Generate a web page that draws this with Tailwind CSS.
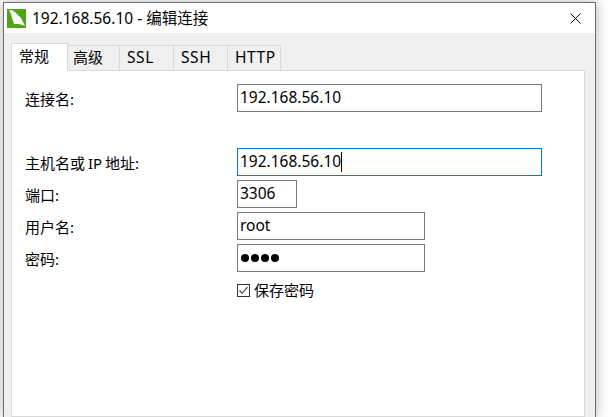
<!DOCTYPE html>
<html>
<head>
<meta charset="utf-8">
<script src="https://cdn.jsdelivr.net/npm/@tailwindcss/browser@4"></script>
</head>
<body class="w-[608px] h-[417px] overflow-hidden bg-white font-['Noto_Sans','Noto_Sans_CJK_SC',sans-serif] text-[15px] text-black">
<div class="flex h-[417px] w-[608px] pt-[2px] pr-[12px] pl-[3px]">
  <div class="flex h-[415px] w-[593px] flex-col border-t border-r border-l border-[#6e6e6e] shadow-[0_0_12px_rgba(0,0,0,0.3)]">
    <div class="flex h-[30px] shrink-0 items-center bg-white pr-[14px] pl-[3px]">
      <svg class="mt-[1px] h-[19px] w-[19px] shrink-0" viewBox="0 0 19 19"><rect width="19" height="19" fill="#4ea516"/><path d="M2 1 L6 1.5 L10 5 L14 9 L16 13 L18 17 L12 15 L7 15 L5 9 L4 5 Z" fill="#fff"/></svg>
      <span class="ml-[6px] text-[15.5px] leading-[20px]">192.168.56.10 - 编辑连接</span>
      <svg class="ml-auto h-[11px] w-[11px]" viewBox="0 0 11 11"><path d="M0.5 0.5 L10.5 10.5 M10.5 0.5 L0.5 10.5" stroke="#111" stroke-width="1" fill="none"/></svg>
    </div>
    <div class="flex min-h-0 flex-1 flex-col bg-[#f0f0f0] pt-[10px] pr-[10px] pl-[7px]">
      <div class="flex h-[27px] shrink-0 items-end">
        <div class="z-10 -mb-px flex h-[28px] w-[57px] items-center border border-b-0 border-[#d9d9d9] bg-white pb-[3px] pl-[7px]">常规</div>
        <div class="flex h-[25px] w-[52px] items-center border-t border-r border-[#d9d9d9] pb-[2px] pl-[5px]">高级</div>
        <div class="flex h-[25px] w-[54px] items-center border-t border-r border-[#d9d9d9] pl-[7px] text-[15.5px] tracking-[0.6px]">SSL</div>
        <div class="flex h-[25px] w-[54px] items-center border-t border-r border-[#d9d9d9] pl-[7px] text-[15.5px] tracking-[0.6px]">SSH</div>
        <div class="flex h-[25px] w-[53px] items-center border-t border-r border-[#d9d9d9] pl-[7px] text-[15.5px] tracking-[0.6px]">HTTP</div>
      </div>
      <div class="min-h-0 flex-1 border border-[#d9d9d9] bg-white pt-[13px] pl-[13px]">
        <div class="flex h-[28px] items-center"><span class="w-[212px] pt-[2px]">连接名:</span><div class="flex h-[28px] w-[305px] items-center border border-[#7a7a7a] pl-[2px] text-[15.5px]">192.168.56.10</div></div>
        <div class="mt-[36px] flex h-[28px] items-center"><span class="w-[212px] pt-[2px] [word-spacing:-1px]">主机名或 IP 地址:</span><div class="flex h-[28px] w-[305px] items-center border border-[#0078d7] pl-[2px] text-[15.5px]">192.168.56.10<span class="h-[20px] w-px bg-black"></span></div></div>
        <div class="mt-[4px] flex h-[28px] items-center"><span class="w-[212px] pt-[2px]">端口:</span><div class="flex h-[28px] w-[60px] items-center border border-[#7a7a7a] pl-[2px] text-[15.5px]">3306</div></div>
        <div class="mt-[4px] flex h-[28px] items-center"><span class="w-[212px] pt-[2px]">用户名:</span><div class="flex h-[28px] w-[188px] items-center border border-[#7a7a7a] pl-[2px] text-[15.5px]">root</div></div>
        <div class="mt-[4px] flex h-[28px] items-center"><span class="w-[212px] pt-[2px]">密码:</span><div class="flex h-[28px] w-[188px] items-center gap-[2px] border border-[#7a7a7a] pl-[3px]"><i class="h-[8px] w-[8px] rounded-full bg-black"></i><i class="h-[8px] w-[8px] rounded-full bg-black"></i><i class="h-[8px] w-[8px] rounded-full bg-black"></i><i class="h-[8px] w-[8px] rounded-full bg-black"></i></div></div>
        <div class="mt-[6px] flex h-[24px] items-center pl-[212px]">
          <svg class="h-[13px] w-[13px] shrink-0" viewBox="0 0 13 13"><rect x="0.5" y="0.5" width="12" height="12" fill="#fff" stroke="#333"/><path d="M2.5 6.5 L5.2 9.3 L10.5 3.2" fill="none" stroke="#333" stroke-width="1.1"/></svg>
          <span class="ml-[4px]">保存密码</span>
        </div>
      </div>
    </div>
  </div>
</div>
</body>
</html>
